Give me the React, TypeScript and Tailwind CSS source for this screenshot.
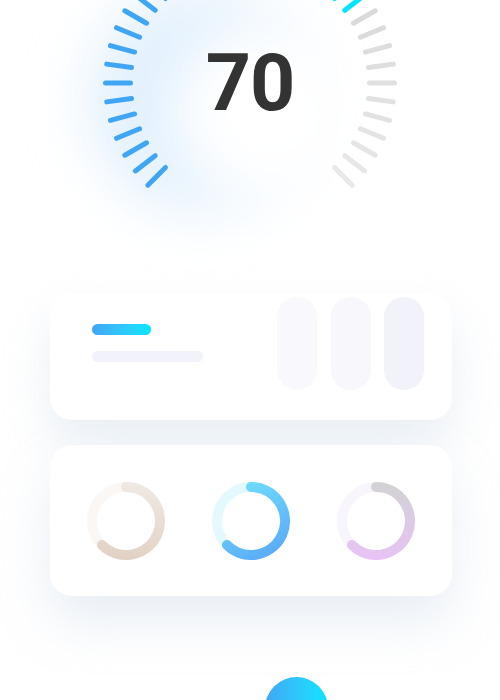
import React from "react";

const CX = 250;
const CY = 83;
const TICKS = 37;
const ACTIVE = 26;

function mix(a: number[], b: number[], t: number) {
  const c = a.map((v, i) => Math.round(v + (b[i] - v) * t));
  return `rgb(${c[0]},${c[1]},${c[2]})`;
}

function Gauge() {
  const ticks = Array.from({ length: TICKS }, (_, i) => {
    const deg = -135 + i * 7.5;
    const a = (deg * Math.PI) / 180;
    const x1 = CX + 119.5 * Math.sin(a);
    const y1 = CY - 119.5 * Math.cos(a);
    const x2 = CX + 144.5 * Math.sin(a);
    const y2 = CY - 144.5 * Math.cos(a);
    let color: string;
    if (i < ACTIVE) {
      const t = Math.min(1, Math.max(0, (x2 - 200) / 150));
      color = mix([64, 166, 244], [0, 230, 255], t * t);
    } else {
      const t = (i - ACTIVE) / (TICKS - ACTIVE - 1);
      color = mix([218, 218, 218], [232, 232, 232], t);
    }
    return { x1, y1, x2, y2, color };
  });

  return (
    <svg width="500" height="293" viewBox="0 0 500 293" className="block shrink-0">
      <defs>
        <filter id="glow" x="-50%" y="-50%" width="200%" height="200%">
          <feGaussianBlur stdDeviation="28" />
        </filter>
      </defs>
      <circle cx={200} cy={100} r={112} fill="#e1f0fd" filter="url(#glow)" />
      <circle cx={266} cy={112} r={92} fill="#ffffff" filter="url(#glow)" />
      {ticks.map((t, i) => (
        <line
          key={i}
          x1={t.x1}
          y1={t.y1}
          x2={t.x2}
          y2={t.y2}
          stroke={t.color}
          strokeWidth={5}
          strokeLinecap="round"
        />
      ))}
      <text
        x={CX}
        y={110}
        textAnchor="middle"
        fontFamily="Roboto, 'Liberation Sans', sans-serif"
        fontWeight={700}
        fontSize={79}
        letterSpacing={-1}
        fill="#333333"
      >
        70
      </text>
    </svg>
  );
}

// arc from 12 o'clock, clockwise 225deg
const ARC = "M 39 5 A 34 34 0 1 1 14.96 63.04";

function Ring({
  id,
  track,
  from,
  to,
  gx1,
  gy1,
  gx2,
  gy2,
}: {
  id: string;
  track: string;
  from: string;
  to: string;
  gx1: number;
  gy1: number;
  gx2: number;
  gy2: number;
}) {
  return (
    <svg width="78" height="78" viewBox="0 0 78 78" className="block shrink-0">
      <defs>
        <linearGradient id={id} gradientUnits="userSpaceOnUse" x1={gx1} y1={gy1} x2={gx2} y2={gy2}>
          <stop offset="0" stopColor={from} />
          <stop offset="1" stopColor={to} />
        </linearGradient>
      </defs>
      <circle cx="39" cy="39" r="34" fill="none" stroke={track} strokeWidth="10" />
      <path d={ARC} fill="none" stroke={`url(#${id})`} strokeWidth="10" strokeLinecap="round" />
    </svg>
  );
}

export default function App() {
  return (
    <div className="flex h-[700px] w-[500px] flex-col overflow-hidden bg-white">
      <Gauge />

      <div className="ml-[50px] flex h-[127px] w-[402px] shrink-0 justify-between rounded-[22px] bg-white pl-[42px] pr-[28px] pt-[4px] shadow-[0_24px_48px_rgba(165,188,215,0.24)]">
        <div className="mt-[27px] flex flex-col gap-[16px]">
          <div className="h-[11px] w-[59px] rounded-full bg-gradient-to-r from-[#40a6f4] to-[#00e6ff]" />
          <div className="h-[11px] w-[111px] rounded-full bg-[#f2f2fa]" />
        </div>
        <div className="flex gap-[13.5px]">
          <div className="h-[93px] w-[40px] rounded-full bg-[#f9f9fd]" />
          <div className="h-[93px] w-[40px] rounded-full bg-[#f7f7fc]" />
          <div className="h-[93px] w-[40px] rounded-full bg-[#f2f2fb]" />
        </div>
      </div>

      <div className="ml-[50px] mt-[25px] flex h-[151px] w-[402px] shrink-0 items-center justify-between rounded-[22px] bg-white px-[37px] shadow-[0_26px_52px_rgba(165,188,215,0.26)]">
        <Ring id="r1" track="#faf7f5" from="#efe8e2" to="#e1d1c4" gx1={39} gy1={0} gx2={30} gy2={78} />
        <Ring id="r2" track="#e4f9fd" from="#70dcfc" to="#58a8f7" gx1={30} gy1={0} gx2={70} gy2={75} />
        <Ring id="r3" track="#f8f6fc" from="#d2d2d4" to="#e8c2f7" gx1={39} gy1={0} gx2={30} gy2={78} />
      </div>

      <div className="ml-[265px] mt-[81px] h-[63px] w-[63px] shrink-0 rounded-full bg-gradient-to-r from-[#3ea6f5] to-[#00e6ff]" />
    </div>
  );
}
